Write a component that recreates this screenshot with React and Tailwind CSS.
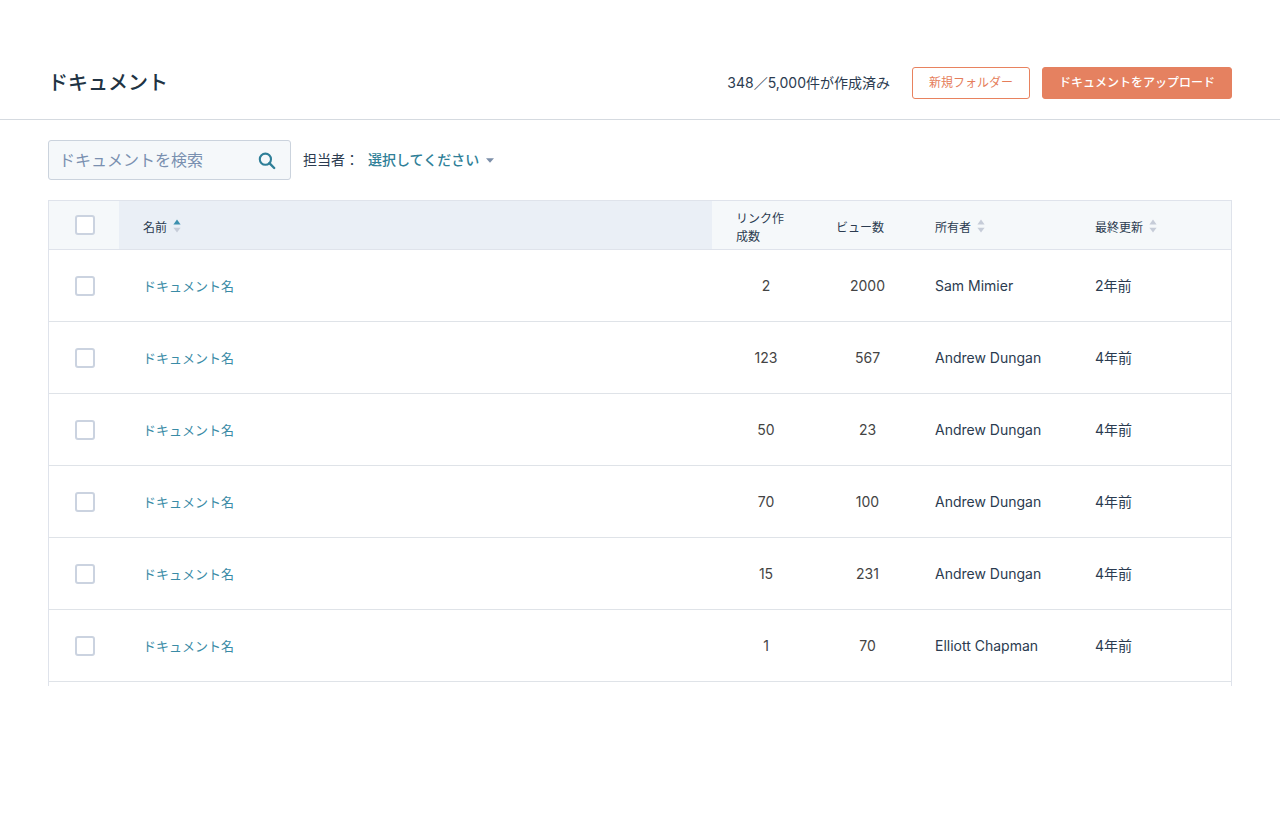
const documents = [
  { name: 'ドキュメント名', links: 2, views: 2000, owner: 'Sam Mimier', updated: '2年前' },
  { name: 'ドキュメント名', links: 123, views: 567, owner: 'Andrew Dungan', updated: '4年前' },
  { name: 'ドキュメント名', links: 50, views: 23, owner: 'Andrew Dungan', updated: '4年前' },
  { name: 'ドキュメント名', links: 70, views: 100, owner: 'Andrew Dungan', updated: '4年前' },
  { name: 'ドキュメント名', links: 15, views: 231, owner: 'Andrew Dungan', updated: '4年前' },
  { name: 'ドキュメント名', links: 1, views: 70, owner: 'Elliott Chapman', updated: '4年前' },
];

function Checkbox({ label }) {
  return (
    <input
      type="checkbox"
      aria-label={label}
      className="block size-5 appearance-none rounded-[3px] border-2 border-[#cbd3e0] bg-white checked:bg-[#2f7f98]"
    />
  );
}

function SortButton({ children, ascending = false }) {
  return (
    <button type="button" className="flex items-center gap-1.5">
      {children}
      <svg viewBox="0 0 8 14" className="-mt-1 h-3.5 w-2" aria-hidden="true">
        <path d="M4 0.5 7.6 5.6H0.4z" fill={ascending ? '#3d90ae' : '#c6ccd8'} />
        <path d="M4 13.6 0.4 8.8h7.2z" fill="#c6ccd8" />
      </svg>
    </button>
  );
}

function PageHeader() {
  return (
    <header className="flex items-center justify-between border-b border-[#d5dae0] px-12 pt-[67px] pb-5">
      <h1 className="text-xl leading-8 font-medium text-[#213343]">ドキュメント</h1>
      <div className="flex items-center gap-3">
        <p className="mr-2.5 text-sm">348／5,000件が作成済み</p>
        <button
          type="button"
          className="h-8 rounded-[3px] border border-[#e8825f] bg-white px-4 text-xs text-[#e57d5a]"
        >
          新規フォルダー
        </button>
        <button
          type="button"
          className="h-8 rounded-[3px] border border-[#e58160] bg-[#e58160] px-4 text-xs font-medium text-white"
        >
          ドキュメントをアップロード
        </button>
      </div>
    </header>
  );
}

function Filters() {
  return (
    <div className="flex items-center gap-3">
      <form
        role="search"
        className="flex h-10 w-[243px] items-center rounded-[3px] border border-[#cbd3dd] bg-[#f5f8fa] pr-3.5 pl-2.5"
      >
        <input
          type="text"
          aria-label="ドキュメントを検索"
          placeholder="ドキュメントを検索"
          className="min-w-0 flex-1 bg-transparent text-base outline-none placeholder:text-[#7a90b0]"
        />
        <button type="button" aria-label="検索" className="mt-0.5">
          <svg viewBox="0 0 18 18" className="size-[18px]" fill="none" stroke="#2f7f98" aria-hidden="true">
            <circle cx="7.4" cy="7.2" r="5.6" strokeWidth="2.1" />
            <path d="M11.4 11.2 16.2 16" strokeWidth="2.4" strokeLinecap="round" />
          </svg>
        </button>
      </form>
      <div className="flex items-center text-sm">
        <label htmlFor="owner" className="w-[65px]">
          担当者：
        </label>
        <div className="relative">
          <select
            id="owner"
            className="block appearance-none bg-transparent pr-5 font-medium text-[#2f7f98]"
          >
            <option>選択してください</option>
          </select>
          <svg
            viewBox="0 0 8 5"
            className="pointer-events-none absolute top-2 right-1.5 h-[5px] w-2"
            aria-hidden="true"
          >
            <path d="M0 0.3h8L4 4.7z" fill="#7c8fa9" />
          </svg>
        </div>
      </div>
    </div>
  );
}

function DocumentTable() {
  const head = 'h-[50px] border-y border-[#dfe3eb] pl-6 pt-1.5 font-normal';
  const cell = 'h-[72px] border-b border-[#dfe3e8] pl-6';
  return (
    <div className="border-x border-[#dfe3eb] pb-1">
      <table className="w-full table-fixed border-separate border-spacing-0 text-left text-sm">
        <colgroup>
          <col className="w-[70px]" />
          <col />
          <col className="w-[100px]" />
          <col className="w-[99px]" />
          <col className="w-[160px]" />
          <col className="w-[160px]" />
        </colgroup>
        <thead className="bg-[#f5f8fa] text-xs leading-[18px]">
          <tr>
            <th className="h-[50px] border-y border-[#dfe3eb] pl-[26px]">
              <Checkbox label="すべて選択" />
            </th>
            <th className={`${head} bg-[#eaeff6]`} aria-sort="ascending">
              <SortButton ascending>名前</SortButton>
            </th>
            <th className={`${head} pr-6`}>リンク作成数</th>
            <th className={head}>ビュー数</th>
            <th className={head}>
              <SortButton>所有者</SortButton>
            </th>
            <th className={head}>
              <SortButton>最終更新</SortButton>
            </th>
          </tr>
        </thead>
        <tbody>
          {documents.map((doc, index) => (
            <tr key={index}>
              <td className="h-[72px] border-b border-[#dfe3e8] pl-[26px]">
                <Checkbox label={`${doc.name} ${index + 1}`} />
              </td>
              <td className={cell}>
                <a href="#document" className="text-[13px] text-[#3a8ba6]">
                  {doc.name}
                </a>
              </td>
              <td className={`${cell} pr-4 text-center text-[#444444]`}>{doc.links}</td>
              <td className={`${cell} pr-3 text-center text-[#444444]`}>{doc.views}</td>
              <td className={cell}>{doc.owner}</td>
              <td className={cell}>{doc.updated}</td>
            </tr>
          ))}
        </tbody>
      </table>
    </div>
  );
}

export default function App() {
  return (
    <div className="min-h-screen bg-white font-['Inter','Noto_Sans_CJK_JP',sans-serif] text-[#2b3b50]" lang="ja">
      <PageHeader />
      <main className="flex flex-col gap-5 px-12 py-5">
        <Filters />
        <DocumentTable />
      </main>
    </div>
  );
}
